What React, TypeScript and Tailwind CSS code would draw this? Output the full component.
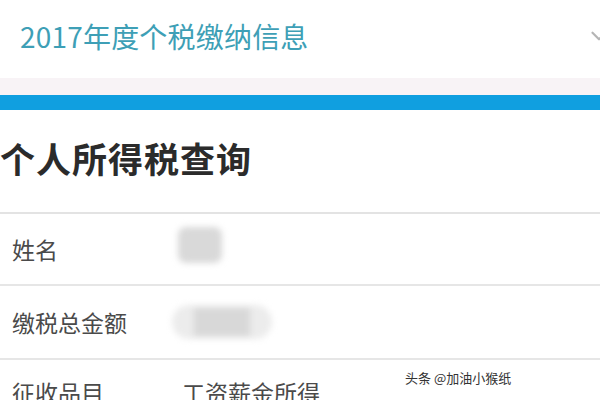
import { ChevronDown } from 'lucide-react'

const font = { fontFamily: '"Noto Sans CJK SC", "Noto Sans", sans-serif' }

const Row = ({ label, children, h }: { label: string; children?: React.ReactNode; h: string }) => (
  <div className={`flex items-center border-b-2 border-[#e6e6e6] ${h}`}>
    <span className="w-[172px] shrink-0 pl-[12px] text-[23px] text-[#4a4a4a] leading-none">{label}</span>
    <div className="flex items-center">{children}</div>
  </div>
)

export default function App() {
  return (
    <div className="relative w-[600px] h-[400px] overflow-hidden bg-white" style={font}>
      <div className="flex items-center justify-between h-[78px] pl-[20px]">
        <span className="text-[28px] text-[#3e9fb6] leading-none tracking-[0.2px] -mt-[6px]">2017年度个税缴纳信息</span>
        <ChevronDown className="w-[26px] h-[26px] text-[#b5b5b5] -mr-[12px] -mt-[6px]" strokeWidth={2} />
      </div>
      <div className="h-[17px] bg-[#f8f3f6]" />
      <div className="h-[15px] bg-[#109fe0]" />

      <div className="h-[102px] flex items-start pt-[30px]">
        <h1 className="text-[35px] font-bold text-[#2b2b2b] leading-none tracking-[1px]">个人所得税查询</h1>
      </div>
      <div className="h-[2px] bg-[#e3e3e3]" />

      <Row label="姓名" h="h-[72px]">
        <div className="ml-[6px] -mt-[8px] w-[44px] h-[36px] rounded-[8px] bg-[#d9d9d9] blur-[3px]" />
      </Row>
      <Row label="缴税总金额" h="h-[74px]">
        <div className="flex items-center">
          <div className="w-[100px] h-[34px] rounded-full bg-[#ececec] blur-[3px] flex items-center justify-center">
            <div className="w-[56px] h-[28px] bg-[#d8d8d8]" />
          </div>
        </div>
      </Row>
      <div className="flex items-center h-[56px] pt-[8px]">
        <span className="w-[182px] shrink-0 pl-[12px] text-[23px] text-[#4a4a4a] leading-none">征收品目</span>
        <span className="text-[23px] text-[#4a4a4a] leading-none">工资薪金所得</span>
      </div>

      <span
        className="absolute left-[405px] top-[371px] text-[13px] text-[#333] leading-none"
        style={{ textShadow: '0 0 2px #fff, 0 0 2px #fff' }}
      >
        头条 @加油小猴纸
      </span>
    </div>
  )
}
